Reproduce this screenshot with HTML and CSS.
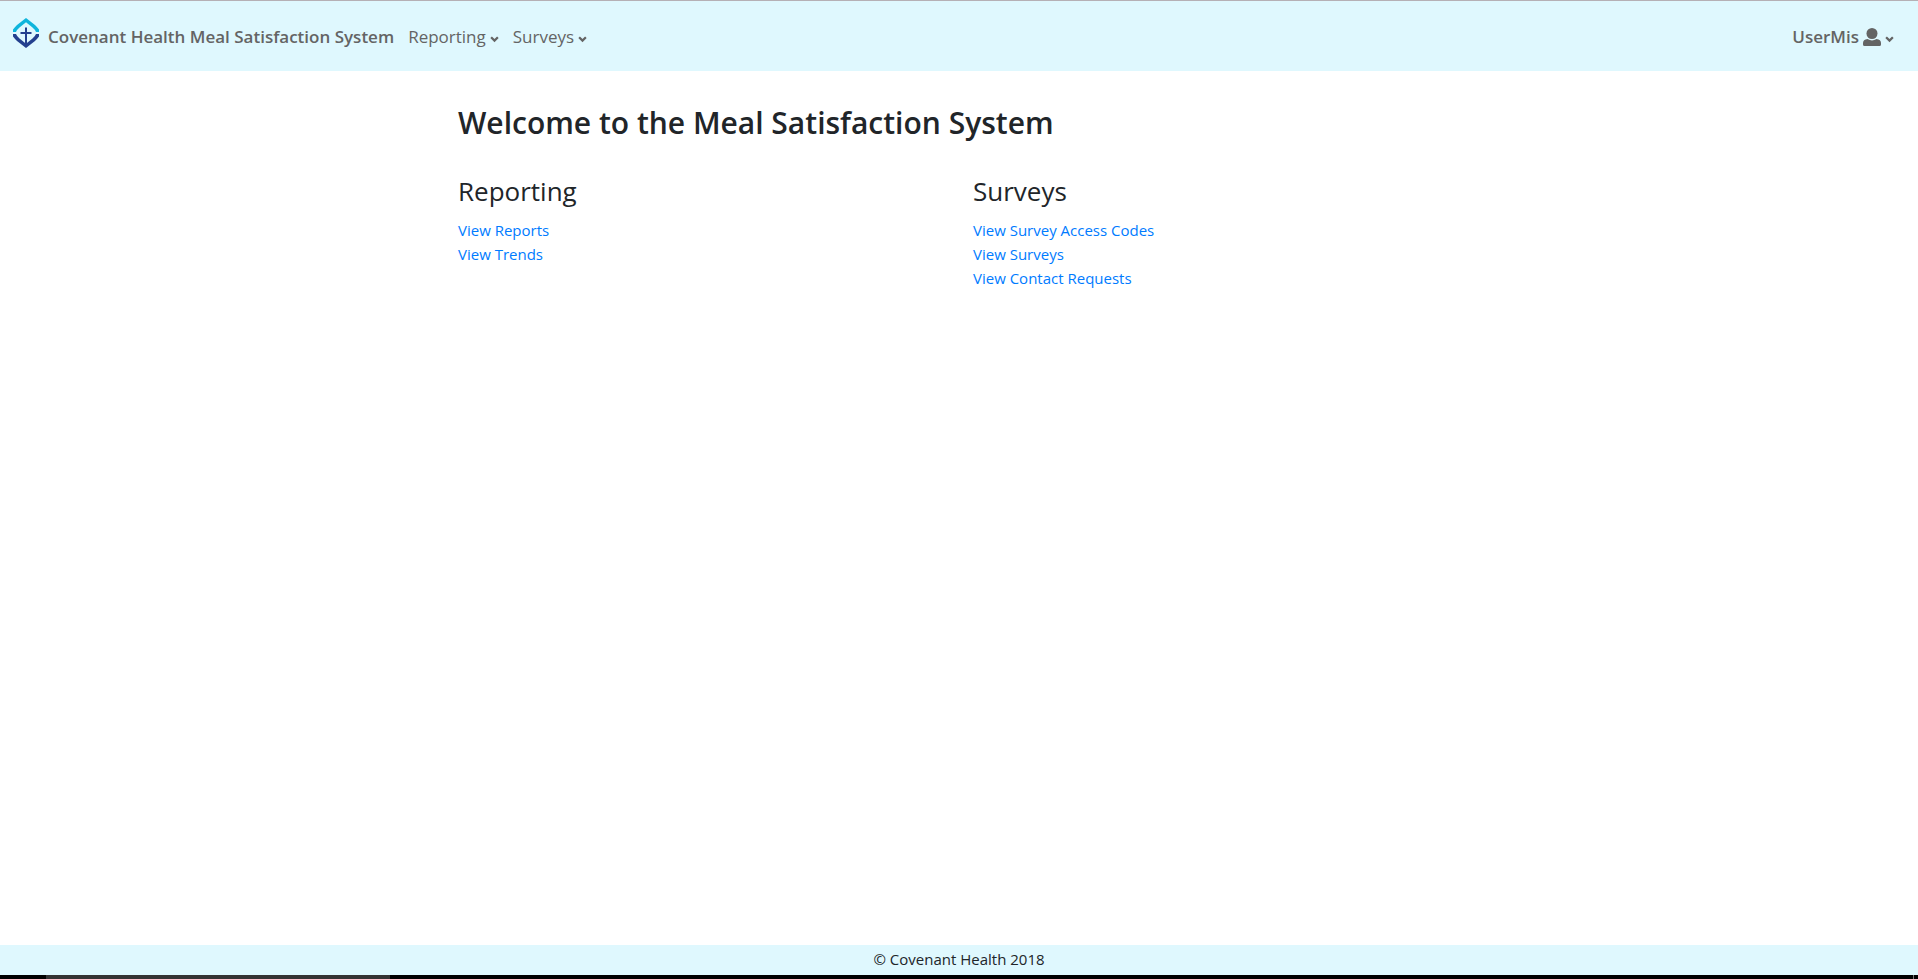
FILE: index.html
```html
<!DOCTYPE html>
<html lang="en">
<head>
<meta charset="utf-8">
<meta name="viewport" content="width=device-width, initial-scale=1">
<title>Covenant Health Meal Satisfaction System</title>
<link rel="stylesheet" href="styles.css">
</head>
<body>
<header class="navbar">
  <a class="brand" href="#">
    <svg class="logo" viewBox="0 0 26 30" aria-hidden="true">
      <path d="M0 14V11.500Q1.500 9.500 4 7L13 0L22 7Q24.500 9.500 26 11.500V14H23Q22 11.500 19.500 9.500L13 4.200L6.500 9.500Q4 11.500 3 14Z" fill="#0fb5dc"/>
      <path d="M0 16V18.500Q1.500 20.500 4 23L13 30L22 23Q24.500 20.500 26 18.500V16H23Q22 18.500 19.500 20.500L13 25.800L6.500 20.500Q4 18.500 3 16Z" fill="#24408e"/>
      <path d="M13 9.500V28M7.500 15H18.500" fill="none" stroke="#24408e" stroke-width="2"/>
    </svg>
    <span>Covenant Health Meal Satisfaction System</span>
  </a>
  <nav class="menu" aria-label="Main">
    <button class="menu-item" type="button">Reporting
      <svg class="caret" viewBox="0 0 8 6" aria-hidden="true"><path d="M1 1L4 4L7 1"/></svg>
    </button>
    <button class="menu-item" type="button">Surveys
      <svg class="caret" viewBox="0 0 8 6" aria-hidden="true"><path d="M1 1L4 4L7 1"/></svg>
    </button>
  </nav>
  <button class="menu-item user" type="button">UserMis
    <svg class="person" viewBox="0 0 18 18" aria-hidden="true"><circle cx="9" cy="5.500" r="5.500"/><path d="M4.500 11Q9 13.800 13.500 11Q18 11.500 18 15V16.500Q18 18 16.500 18H1.500Q0 18 0 16.500V15Q0 11.500 4.500 11Z"/></svg>
    <svg class="caret" viewBox="0 0 8 6" aria-hidden="true"><path d="M1 1L4 4L7 1"/></svg>
  </button>
</header>
<main class="content">
  <h1 class="title">Welcome to the Meal Satisfaction System</h1>
  <div class="columns">
    <section>
      <h2 class="heading">Reporting</h2>
      <ul class="links">
        <li><a href="#">View Reports</a></li>
        <li><a href="#">View Trends</a></li>
      </ul>
    </section>
    <section>
      <h2 class="heading">Surveys</h2>
      <ul class="links">
        <li><a href="#">View Survey Access Codes</a></li>
        <li><a href="#">View Surveys</a></li>
        <li><a href="#">View Contact Requests</a></li>
      </ul>
    </section>
  </div>
</main>
<footer class="footer">© Covenant Health 2018</footer>
<div class="taskbar"><div class="taskbar-active"></div><div class="taskbar-edge"></div></div>
</body>
</html>
```
FILE: styles.css
```css
* {
  box-sizing: border-box;
}

body {
  margin: 0;
  min-height: 100vh;
  display: flex;
  flex-direction: column;
  background: #fff;
  color: #212529;
  font: 15px/24px "Segoe UI", "Open Sans", sans-serif;
}

.navbar {
  display: flex;
  align-items: center;
  min-height: 71px;
  padding: 2px 24px 0 13px;
  border-top: 1px solid #b5b0b5;
  background: #dff8fe;
  color: #646464;
  font-size: 17px;
}

.brand {
  display: flex;
  align-items: center;
  gap: 9px;
  color: inherit;
  font-weight: 600;
  text-decoration: none;
}

.logo {
  width: 26px;
  height: 30px;
  margin-bottom: 8px;
}

.menu {
  display: flex;
  gap: 14px;
  margin-left: 14px;
}

.menu-item {
  display: flex;
  align-items: center;
  gap: 4px;
  padding: 0;
  border: 0;
  background: none;
  color: inherit;
  font: inherit;
  cursor: pointer;
}

.user {
  margin-left: auto;
  font-weight: 600;
}

.caret {
  width: 9px;
  height: 7px;
  margin-top: 4px;
  fill: none;
  stroke: currentColor;
  stroke-width: 2;
}

.person {
  width: 18px;
  height: 18px;
  fill: currentColor;
}

.content {
  flex: 1;
  width: 100%;
  max-width: 1030px;
  margin: 0 auto;
  padding: 33px 0 24px 14px;
}

.title {
  margin: 0 0 32px;
  font-size: 30px;
  font-weight: 600;
  line-height: 38px;
}

.columns {
  display: grid;
  grid-template-columns: 1fr 1fr;
  margin-right: -14px;
}

.heading {
  margin: 0 0 10px;
  font-size: 26px;
  font-weight: 400;
  line-height: 34px;
}

.links {
  margin: 0;
  padding: 0;
  list-style: none;
}

.links a {
  color: #007bff;
  text-decoration: none;
}

.footer {
  padding: 2px 0 4px;
  background: #dff8fe;
  text-align: center;
}

.taskbar {
  display: flex;
  justify-content: space-between;
  height: 4px;
  padding: 0 4px 0 46px;
  background: #000;
}

.taskbar-active {
  width: 344px;
  background: #333;
}

.taskbar-edge {
  width: 1px;
  background: #777;
}
```
